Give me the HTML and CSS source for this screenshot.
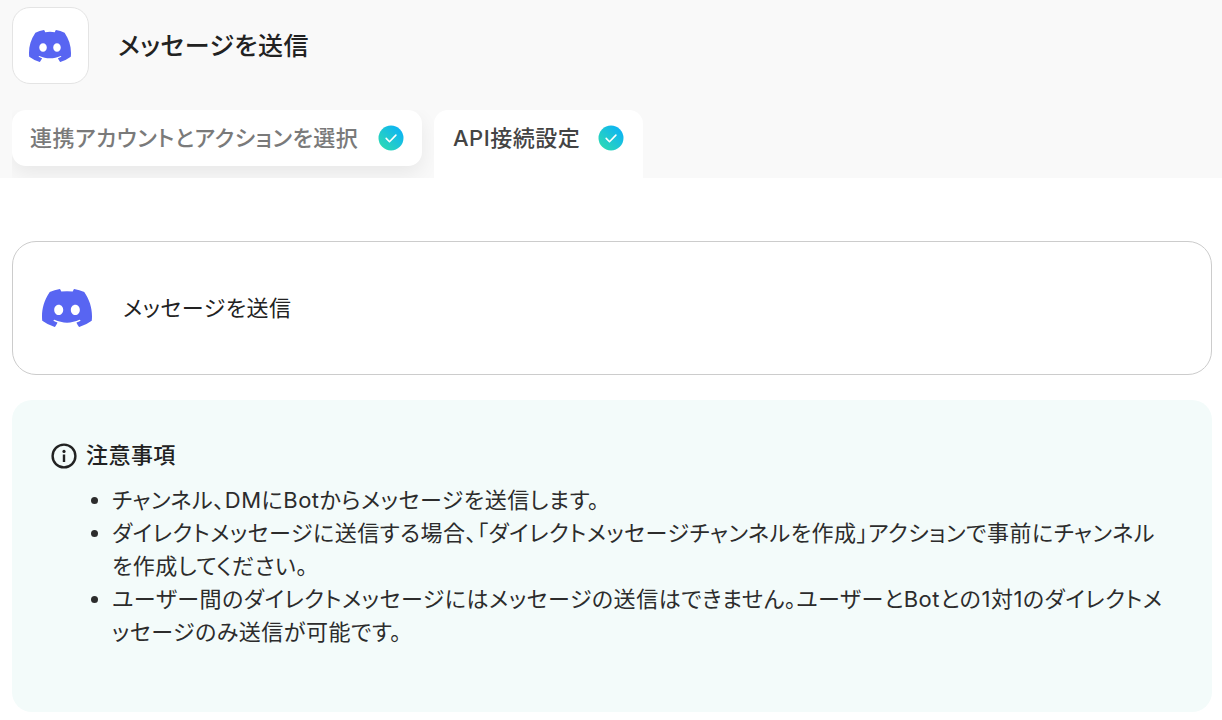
FILE: index.html
```html
<!DOCTYPE html>
<html lang="ja">
<head>
<meta charset="utf-8">
<title>メッセージを送信</title>
<link rel="stylesheet" href="styles.css">
</head>
<body>
<svg class="defs" width="0" height="0" aria-hidden="true"><defs>
<symbol id="discord" viewBox="0 0 16 16"><path fill="#5865f2" d="M13.545 2.907a13.2 13.2 0 0 0-3.257-1.011.05.05 0 0 0-.052.025c-.141.25-.297.577-.406.833a12.2 12.2 0 0 0-3.658 0 8 8 0 0 0-.412-.833.05.05 0 0 0-.052-.025c-1.125.194-2.22.534-3.257 1.011a.04.04 0 0 0-.021.018C.356 6.024-.213 9.047.066 12.032q.003.022.021.037a13.3 13.3 0 0 0 3.995 2.02.05.05 0 0 0 .056-.019q.463-.63.818-1.329a.05.05 0 0 0-.01-.059l-.018-.011a9 9 0 0 1-1.248-.595.05.05 0 0 1-.02-.066l.015-.019q.127-.095.248-.195a.05.05 0 0 1 .051-.007c2.619 1.196 5.454 1.196 8.041 0a.05.05 0 0 1 .053.007q.121.1.248.195a.05.05 0 0 1-.004.085 8 8 0 0 1-1.249.594.05.05 0 0 0-.03.03.05.05 0 0 0 .003.041c.24.465.515.909.817 1.329a.05.05 0 0 0 .056.019 13.2 13.2 0 0 0 4.001-2.02.05.05 0 0 0 .021-.037c.334-3.451-.559-6.449-2.366-9.106a.03.03 0 0 0-.02-.019m-8.198 7.307c-.789 0-1.438-.724-1.438-1.612s.637-1.613 1.438-1.613c.807 0 1.45.73 1.438 1.613 0 .888-.637 1.612-1.438 1.612m5.316 0c-.788 0-1.438-.724-1.438-1.612s.637-1.613 1.438-1.613c.807 0 1.451.73 1.438 1.613 0 .888-.631 1.612-1.438 1.612"/></symbol>
<linearGradient id="chk" gradientUnits="userSpaceOnUse" x1="3" y1="23" x2="23" y2="3"><stop offset="0" stop-color="#2ddab4"/><stop offset="1" stop-color="#0cb2f6"/></linearGradient>
<symbol id="check" viewBox="0 0 26 26"><circle cx="13" cy="13" r="12.5" fill="url(#chk)"/><path d="M8.2 13.4l3.3 3.3 6.4-6.6" fill="none" stroke="#fff" stroke-width="1.6" stroke-linecap="round" stroke-linejoin="round"/></symbol>
</defs></svg>
<header class="top">
  <div class="title-row">
    <div class="logo-box"><svg class="logo-sm"><use href="#discord"/></svg></div>
    <h1 class="title">メッセージを送信</h1>
  </div>
  <nav class="tabs">
    <div class="tab tab-done"><span class="tab-label">連携アカウントとアクションを選択</span><svg class="check"><use href="#check"/></svg></div>
    <div class="tab tab-active"><span class="tab-label">API接続設定</span><svg class="check"><use href="#check"/></svg></div>
  </nav>
</header>
<main class="content">
  <section class="card">
    <svg class="logo-lg"><use href="#discord"/></svg>
    <span class="card-text">メッセージを送信</span>
  </section>
  <section class="notice">
    <h2 class="notice-head">
      <svg class="info" viewBox="0 0 26 26"><circle cx="13" cy="13" r="11.4" fill="none" stroke="#222" stroke-width="2.4"/><circle cx="13" cy="8.4" r="1.6" fill="#222"/><rect x="11.8" y="11.5" width="2.4" height="7.5" fill="#222"/></svg>
      <span>注意事項</span>
    </h2>
    <ul class="notes">
      <li>チャンネル、DMにBotからメッセージを送信します。</li>
      <li>ダイレクトメッセージに送信する場合、「ダイレクトメッセージチャンネルを作成」アクションで事前にチャンネルを作成してください。</li>
      <li>ユーザー間のダイレクトメッセージにはメッセージの送信はできません。ユーザーとBotとの1対1のダイレクトメッセージのみ送信が可能です。</li>
    </ul>
  </section>
</main>
</body>
</html>
```
FILE: styles.css
```css
* { box-sizing: border-box; }
html, body { margin: 0; padding: 0; overflow: hidden; }
body {
  height: 720px;
  background: #fff;
  color: #222;
  font-family: Inter, "Noto Sans CJK JP", sans-serif;
  font-feature-settings: "palt";
}
.defs { display: block; height: 0; }
.top {
  height: 178px;
  background: #f9f9f9;
  padding: 7px 0 0 12px;
  overflow: hidden;
}
.title-row { display: flex; align-items: center; gap: 29px; height: 77px; }
.logo-box {
  width: 77px; height: 77px;
  background: #fff;
  border: 1px solid #e4e4e4;
  border-radius: 18px;
  display: flex; align-items: center; justify-content: center;
}
.logo-sm { width: 42px; height: 42px; margin-left: -1px; }
.title { margin: -3px 0 0; font-size: 25px; font-weight: 500; letter-spacing: 0.02em; color: #222; }
.tabs { display: flex; gap: 12px; margin-top: 26px; align-items: flex-start; }
.tab {
  display: flex; align-items: center;
  font-size: 22px; letter-spacing: 0.5px; font-weight: 500;
  background: #fff;
}
.tab-label { margin-top: -4px; }
.tab-done {
  gap: 20px;
  width: 410px; height: 56px; padding-left: 18px;
  border-radius: 14px;
  color: #7a7a7a;
  box-shadow: 0 8px 20px rgba(0,0,0,0.07);
  clip-path: inset(0 -12px -12px 0);
}
.tab-active {
  gap: 18px;
  width: 209px; height: 68px; padding: 0 0 12px 19px;
  border-radius: 14px 14px 0 0;
  color: #444;
}
.check { width: 26px; height: 26px; flex: none; }
.content { padding: 63px 10px 0 12px; }
.card {
  height: 134px;
  border: 1px solid #ccc;
  border-radius: 24px;
  display: flex; align-items: center; gap: 31px;
  padding-left: 29px;
}
.logo-lg { width: 50px; height: 50px; }
.card-text { font-size: 22px; letter-spacing: 0.5px; color: #222; margin-top: -5px; }
.notice {
  margin-top: 25px;
  height: 312px;
  background: #f3fbfa;
  border-radius: 20px;
  padding: 40px 47px 0 40px;
}
.notice-head {
  display: flex; align-items: center; gap: 9px;
  margin: 0; font-size: 22px; font-weight: 500; letter-spacing: 0.02em; line-height: 30px;
}
.info { width: 26px; height: 26px; margin-top: 1px; margin-left: -1px; }
.notes {
  margin: 14px 0 0; padding: 0 0 0 60px;
  font-size: 22px; line-height: 33px; letter-spacing: 0.52px; color: #2c2c2c;
}
```
